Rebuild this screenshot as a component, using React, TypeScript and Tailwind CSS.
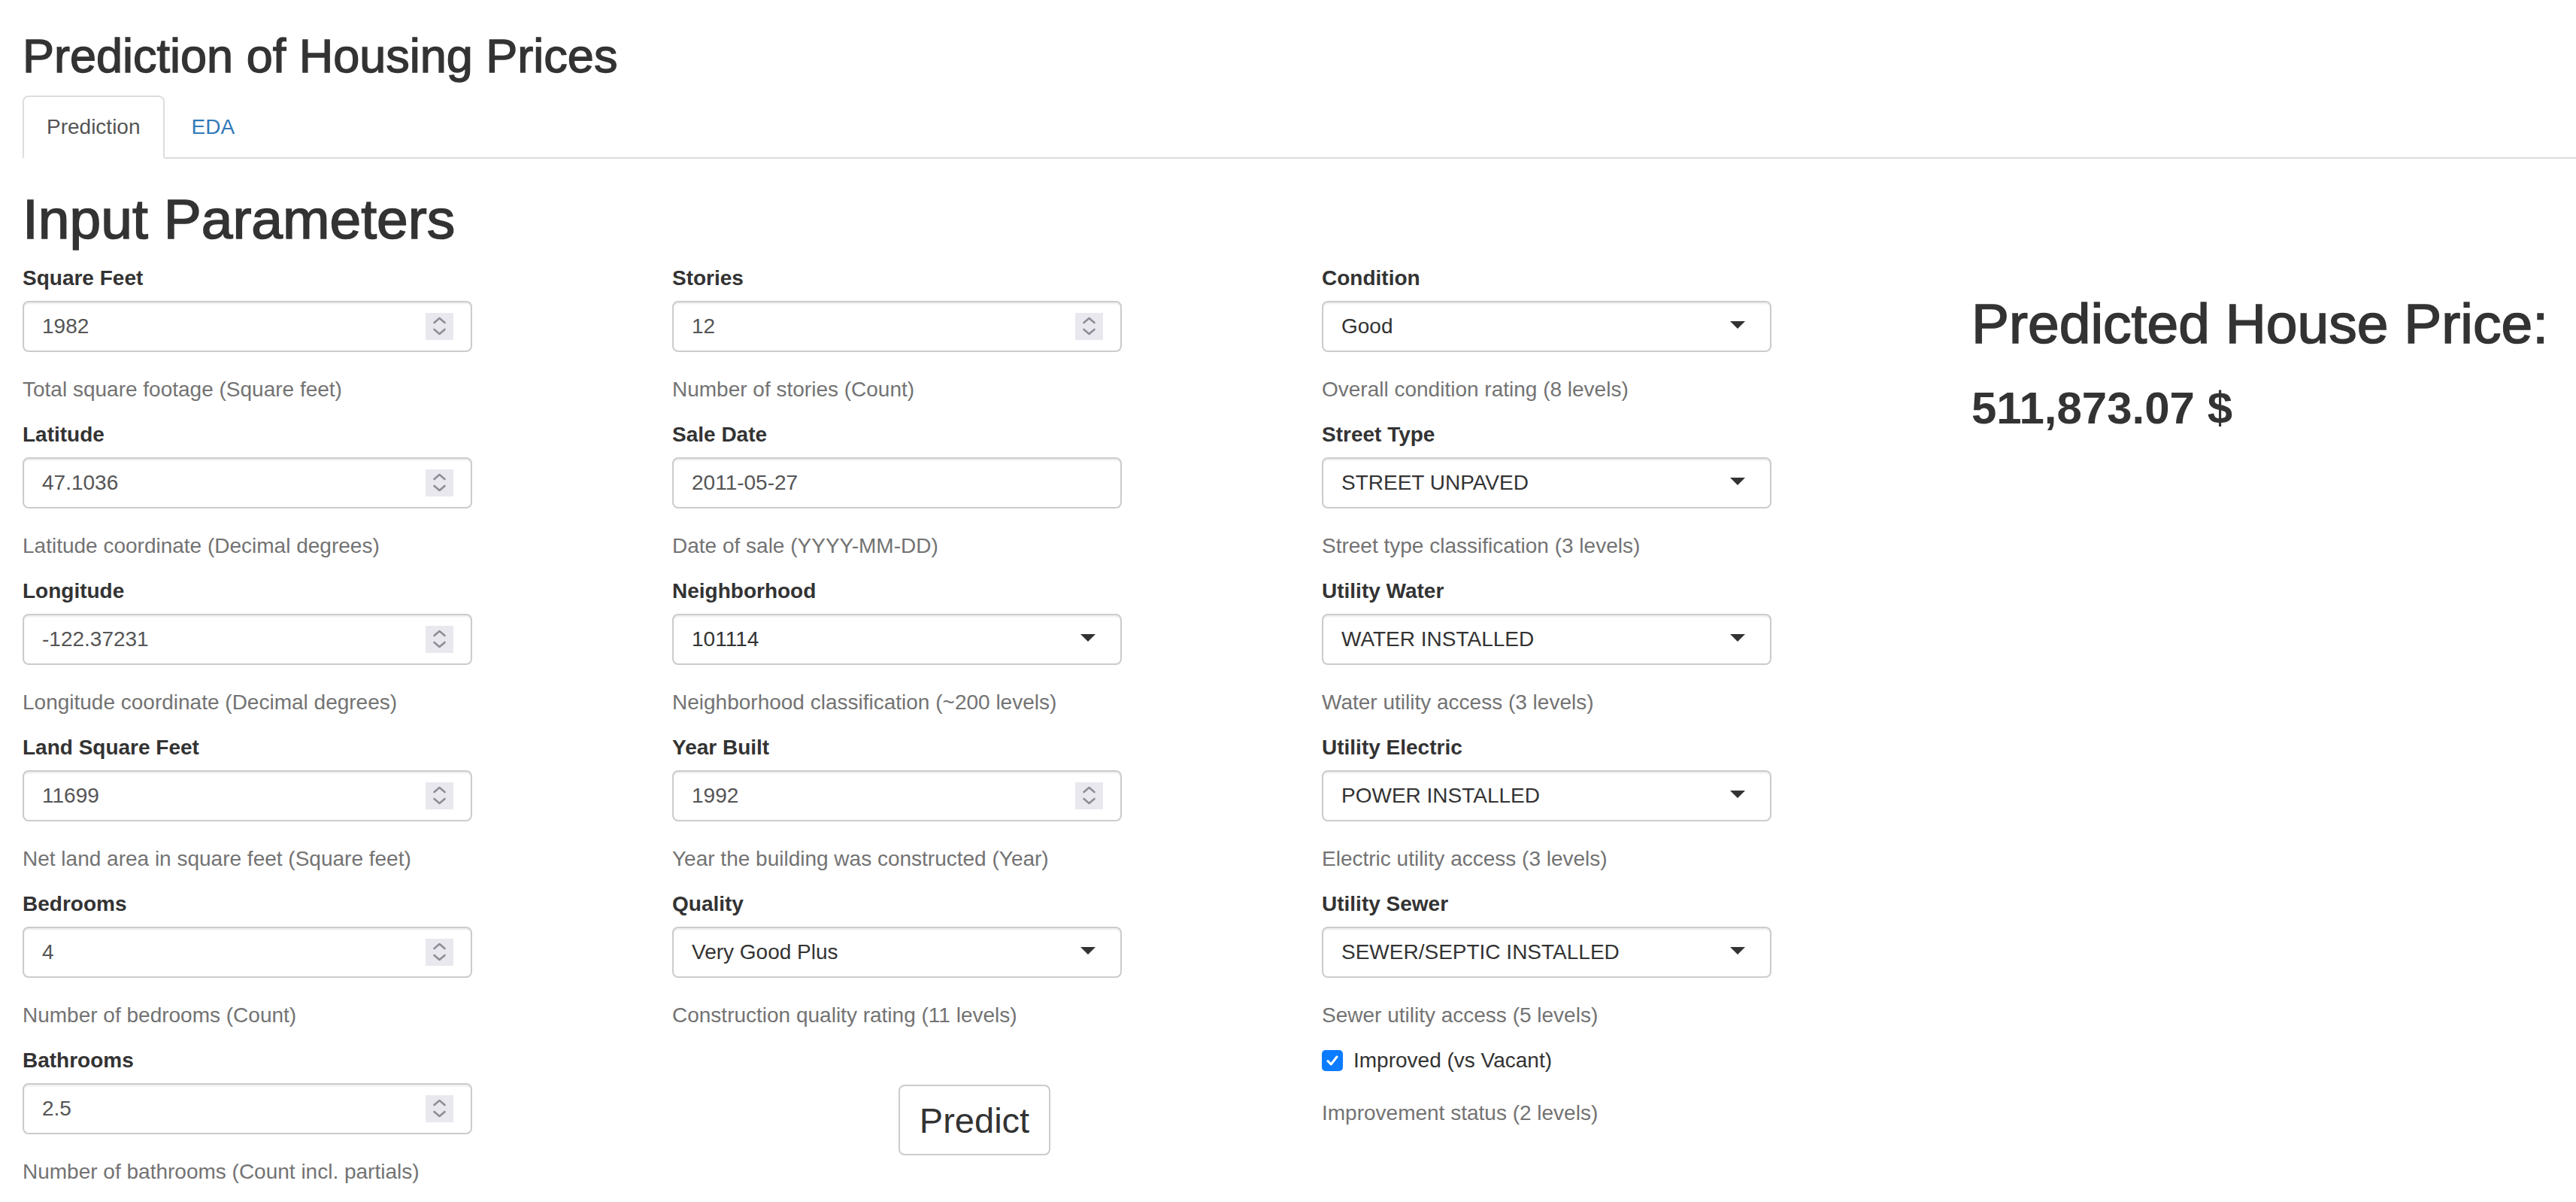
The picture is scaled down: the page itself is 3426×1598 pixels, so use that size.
import React from "react";

type Kind = "number" | "text" | "select";

function Spinner() {
  return (
    <span className="absolute right-[23px] top-[14px] flex h-[36px] w-[37px] items-center justify-center bg-[#e9e8ee]">
      <svg width="37" height="36" viewBox="0 0 37 36" fill="none">
        <polyline points="11.5,13 18.5,7 25.5,13" stroke="#8e8e99" strokeWidth="2.6" strokeLinecap="round" strokeLinejoin="round" />
        <polyline points="11.5,22 18.5,28 25.5,22" stroke="#8e8e99" strokeWidth="2.6" strokeLinecap="round" strokeLinejoin="round" />
      </svg>
    </span>
  );
}

function Caret() {
  return (
    <span className="absolute right-[33px] top-[25px] h-0 w-0 border-x-[10px] border-t-[10px] border-x-transparent border-t-[#333]" />
  );
}

function Field({ label, value, help, kind }: { label: string; value: string; help: string; kind: Kind }) {
  return (
    <div>
      <label className="mb-[10px] block font-bold leading-[40px] text-[#333]">{label}</label>
      <div
        className={
          kind === "select"
            ? "relative flex h-[68px] w-[598px] items-center rounded-[8px] border-2 border-[#ccc] bg-white px-[24px] text-[#333] shadow-[inset_0_2px_2px_rgba(0,0,0,0.075)]"
            : "relative flex h-[68px] w-[598px] items-center rounded-[8px] border-2 border-[#ccc] bg-white px-[24px] text-[#555] shadow-[inset_0_2px_2px_rgba(0,0,0,0.075)]"
        }
      >
        <span>{value}</span>
        {kind === "number" && <Spinner />}
        {kind === "select" && <Caret />}
      </div>
      <p className="mb-[20px] mt-[30px] leading-[40px] text-[#737373]">{help}</p>
    </div>
  );
}

const col1: [string, string, string, Kind][] = [
  ["Square Feet", "1982", "Total square footage (Square feet)", "number"],
  ["Latitude", "47.1036", "Latitude coordinate (Decimal degrees)", "number"],
  ["Longitude", "-122.37231", "Longitude coordinate (Decimal degrees)", "number"],
  ["Land Square Feet", "11699", "Net land area in square feet (Square feet)", "number"],
  ["Bedrooms", "4", "Number of bedrooms (Count)", "number"],
  ["Bathrooms", "2.5", "Number of bathrooms (Count incl. partials)", "number"],
];

const col2: [string, string, string, Kind][] = [
  ["Stories", "12", "Number of stories (Count)", "number"],
  ["Sale Date", "2011-05-27", "Date of sale (YYYY-MM-DD)", "text"],
  ["Neighborhood", "101114", "Neighborhood classification (~200 levels)", "select"],
  ["Year Built", "1992", "Year the building was constructed (Year)", "number"],
  ["Quality", "Very Good Plus", "Construction quality rating (11 levels)", "select"],
];

const col3: [string, string, string, Kind][] = [
  ["Condition", "Good", "Overall condition rating (8 levels)", "select"],
  ["Street Type", "STREET UNPAVED", "Street type classification (3 levels)", "select"],
  ["Utility Water", "WATER INSTALLED", "Water utility access (3 levels)", "select"],
  ["Utility Electric", "POWER INSTALLED", "Electric utility access (3 levels)", "select"],
  ["Utility Sewer", "SEWER/SEPTIC INSTALLED", "Sewer utility access (5 levels)", "select"],
];

export default function App() {
  return (
    <div className="min-h-[1598px] overflow-hidden bg-white px-[30px] font-['Liberation_Sans','Helvetica_Neue',Arial,sans-serif] text-[28px] leading-[40px] text-[#333]">
      <h2 className="mb-[19px] mt-[40px] text-[63px] font-medium leading-[68px] text-[#333] [-webkit-text-stroke:1.4px_#333]">
        Prediction of Housing Prices
      </h2>

      <div className="-mr-[30px] flex border-b-2 border-[#ddd]">
        <div className="-mb-[2px] rounded-t-[8px] border-2 border-[#ddd] border-b-transparent bg-white px-[30px] py-[20px] text-[#555]">
          Prediction
        </div>
        <div className="-mb-[2px] ml-[4px] border-2 border-transparent px-[30px] py-[20px] text-[#337ab7]">EDA</div>
      </div>

      <h1 className="mb-[19px] mt-[40px] text-[75px] font-medium leading-[80px] text-[#333] [-webkit-text-stroke:1.6px_#333]">
        Input Parameters
      </h1>

      <div className="flex">
        <div className="w-[864px] shrink-0">
          {col1.map(([l, v, h, k]) => (
            <Field key={l} label={l} value={v} help={h} kind={k} />
          ))}
        </div>

        <div className="w-[864px] shrink-0">
          {col2.map(([l, v, h, k]) => (
            <Field key={l} label={l} value={v} help={h} kind={k} />
          ))}
          <button className="ml-[301px] mt-[72px] flex h-[94px] w-[202px] items-center justify-center rounded-[8px] border-2 border-[#ccc] bg-white text-[47px] leading-none text-[#333]">
            Predict
          </button>
        </div>

        <div className="w-[864px] shrink-0">
          {col3.map(([l, v, h, k]) => (
            <Field key={l} label={l} value={v} help={h} kind={k} />
          ))}
          <label className="flex items-center leading-[40px] text-[#333]">
            <span className="flex h-[28px] w-[28px] items-center justify-center rounded-[5px] bg-[#0b7cff]">
              <svg width="20" height="20" viewBox="0 0 20 20" fill="none">
                <polyline points="4,10.5 8.2,15 16,5" stroke="#fff" strokeWidth="3" strokeLinecap="round" strokeLinejoin="round" />
              </svg>
            </span>
            <span className="ml-[14px]">Improved (vs Vacant)</span>
          </label>
          <p className="mb-[20px] mt-[30px] leading-[40px] text-[#737373]">Improvement status (2 levels)</p>
        </div>

        <div className="min-w-0 flex-1">
          <h1 className="mt-[40px] whitespace-nowrap text-[75px] font-medium leading-[80px] text-[#333] [-webkit-text-stroke:1.6px_#333]">
            Predicted House Price:
          </h1>
          <div className="mt-[40px] whitespace-nowrap text-[60px] font-bold leading-[66px] text-[#333]">511,873.07 $</div>
        </div>
      </div>
    </div>
  );
}
